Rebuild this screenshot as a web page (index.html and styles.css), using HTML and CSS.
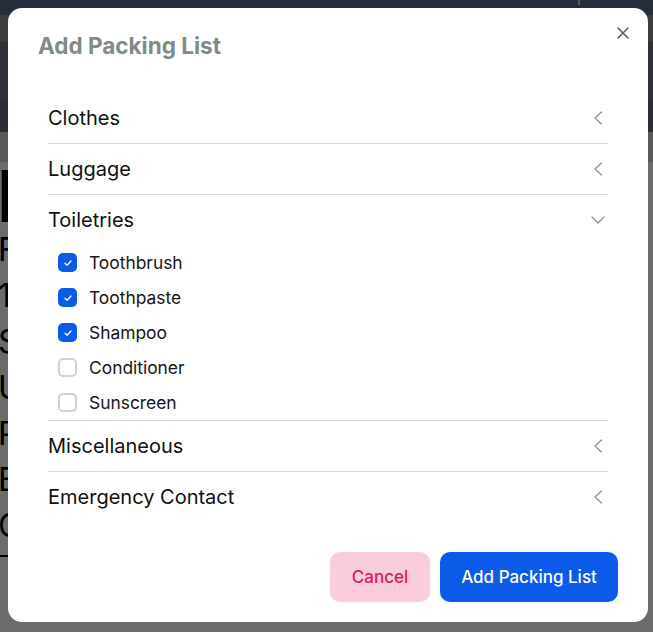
FILE: index.html
```html
<!DOCTYPE html>
<html lang="en">
<head>
<meta charset="utf-8">
<title>Add Packing List</title>
<link rel="stylesheet" href="styles.css">
</head>
<body>
<div class="page">
  <div class="nav"><span class="nav-mark"></span></div>
  <div class="subnav"></div>
  <div class="hero"></div>
  <div class="hero-low"></div>
  <div class="tabs"></div>
  <div class="content">
    <h1 class="trip-title">I</h1>
    <ul class="trip-lines">
      <li>F</li>
      <li>1</li>
      <li>S</li>
      <li>U</li>
      <li>P</li>
      <li>E</li>
      <li>C</li>
    </ul>
    <div class="trip-rule"></div>
  </div>
</div>

<div class="overlay">
  <div class="modal" role="dialog" aria-labelledby="modal-title">
    <button class="close" aria-label="Close">
      <svg width="12" height="12" viewBox="0 0 12 12"><path d="M1 1L11 11M11 1L1 11" stroke="#555a5e" stroke-width="1.5" stroke-linecap="round"/></svg>
    </button>
    <header class="modal-header">
      <h2 id="modal-title" class="modal-title">Add Packing List</h2>
    </header>
    <div class="modal-body">
      <div class="accordion">
        <div class="acc-item">
          <div class="acc-head"><span>Clothes</span><span class="acc-icon"><svg width="10" height="14" viewBox="0 0 10 14"><path d="M8.5 1L2 7L8.5 13" fill="none" stroke="#8c8f94" stroke-width="1.3" stroke-linecap="round" stroke-linejoin="round"/></svg></span></div>
        </div>
        <div class="acc-item">
          <div class="acc-head"><span>Luggage</span><span class="acc-icon"><svg width="10" height="14" viewBox="0 0 10 14"><path d="M8.5 1L2 7L8.5 13" fill="none" stroke="#8c8f94" stroke-width="1.3" stroke-linecap="round" stroke-linejoin="round"/></svg></span></div>
        </div>
        <div class="acc-item">
          <div class="acc-head"><span>Toiletries</span><span class="acc-icon"><svg width="14" height="8" viewBox="0 0 14 8"><path d="M1 1L7 7L13 1" fill="none" stroke="#8c8f94" stroke-width="1.3" stroke-linecap="round" stroke-linejoin="round"/></svg></span></div>
          <div class="acc-panel">
            <label class="check"><span class="box on"><svg width="10" height="8" viewBox="0 0 10 8"><path d="M2 4.2L4.1 6.2L8 2" fill="none" stroke="#fff" stroke-width="1.3" stroke-linecap="round" stroke-linejoin="round"/></svg></span><span>Toothbrush</span></label>
            <label class="check"><span class="box on"><svg width="10" height="8" viewBox="0 0 10 8"><path d="M2 4.2L4.1 6.2L8 2" fill="none" stroke="#fff" stroke-width="1.3" stroke-linecap="round" stroke-linejoin="round"/></svg></span><span>Toothpaste</span></label>
            <label class="check"><span class="box on"><svg width="10" height="8" viewBox="0 0 10 8"><path d="M2 4.2L4.1 6.2L8 2" fill="none" stroke="#fff" stroke-width="1.3" stroke-linecap="round" stroke-linejoin="round"/></svg></span><span>Shampoo</span></label>
            <label class="check"><span class="box"></span><span>Conditioner</span></label>
            <label class="check"><span class="box"></span><span>Sunscreen</span></label>
          </div>
        </div>
        <div class="acc-item">
          <div class="acc-head"><span>Miscellaneous</span><span class="acc-icon"><svg width="10" height="14" viewBox="0 0 10 14"><path d="M8.5 1L2 7L8.5 13" fill="none" stroke="#8c8f94" stroke-width="1.3" stroke-linecap="round" stroke-linejoin="round"/></svg></span></div>
        </div>
        <div class="acc-item">
          <div class="acc-head"><span>Emergency Contact</span><span class="acc-icon"><svg width="10" height="14" viewBox="0 0 10 14"><path d="M8.5 1L2 7L8.5 13" fill="none" stroke="#8c8f94" stroke-width="1.3" stroke-linecap="round" stroke-linejoin="round"/></svg></span></div>
        </div>
      </div>
    </div>
    <footer class="modal-footer">
      <button class="btn btn-cancel">Cancel</button>
      <button class="btn btn-primary">Add Packing List</button>
    </footer>
  </div>
</div>
</body>
</html>
```

FILE: styles.css
```css
* { box-sizing: border-box; }
html, body { margin: 0; padding: 0; }
body {
  font-family: Inter, "Noto Sans", "Liberation Sans", sans-serif;
  background: #ffffff;
  width: 653px;
  height: 632px;
  overflow: hidden;
  position: relative;
}

/* underlying page */
.page { width: 653px; }
.nav {
  height: 15px;
  background: #5c6a8e;
  display: flex;
  justify-content: flex-end;
  padding-right: 73px;
}
.nav-mark { width: 2px; height: 5px; background: #cfd3dc; }
.subnav { height: 27px; background: #8c9493; }
.hero { height: 60px; background: #6e7585; }
.hero-low { height: 30px; background: #656c7c; }
.tabs { height: 30px; background: #d4d4d4; }
.content { padding-top: 2px; color: #000; }
.trip-title {
  margin: 0;
  font-size: 72px;
  line-height: 63px;
  font-weight: 700;
  margin-left: -3px;
}
.trip-lines {
  list-style: none;
  margin: 0;
  padding: 0;
  font-size: 32px;
  line-height: 46px;
  margin-left: -2px;
}
.trip-rule { height: 2px; background: #000; margin-top: 6px; width: 300px; }

/* overlay + modal */
.overlay {
  position: absolute;
  inset: 0;
  background: rgba(0, 0, 0, 0.58);
  display: flex;
  align-items: flex-start;
  justify-content: center;
  padding: 8px 5px 8px 8px;
}
.modal {
  position: relative;
  width: 640px;
  background: #fff;
  border-radius: 14px;
}
.close {
  position: absolute;
  top: 13px;
  right: 13px;
  width: 24px;
  height: 24px;
  border: 0;
  background: transparent;
  padding: 0;
  display: flex;
  align-items: center;
  justify-content: center;
}
.modal-header { padding: 23px 30px 0; }
.modal-title {
  margin: 0;
  font-size: 22.5px;
  line-height: 30px;
  font-weight: 700;
  color: #7f8b86;
}
.modal-body { padding: 32px 40px 0; }
.acc-item + .acc-item { border-top: 1px solid #dcdcdc; }
.acc-head {
  height: 50px;
  display: flex;
  align-items: center;
  justify-content: space-between;
  font-size: 20px;
  color: #111;
}
.acc-icon {
  width: 16px;
  height: 16px;
  margin-right: 2px;
  display: flex;
  align-items: center;
  justify-content: center;
}
.acc-panel { padding-left: 10px; }
.check {
  height: 35px;
  display: flex;
  align-items: center;
  gap: 12px;
  font-size: 17.4px;
  color: #161616;
}
.box {
  width: 19px;
  height: 19px;
  border: 2px solid #d0d1d4;
  border-radius: 5px;
  display: flex;
  align-items: center;
  justify-content: center;
  background: #fff;
}
.box.on { background: #0b5be6; border-color: #0b5be6; }

.modal-footer {
  display: flex;
  justify-content: flex-end;
  gap: 10px;
  padding: 30px 30px 20px;
}
.btn {
  height: 50px;
  border: 0;
  border-radius: 10px;
  font-family: inherit;
  font-size: 17px;
  font-weight: 500;
  padding: 0 20px;
}
.btn-cancel { width: 100px; background: #facdda; color: #e3185b; }
.btn-primary { width: 178px; background: #0b5be8; color: #fff; }
```
